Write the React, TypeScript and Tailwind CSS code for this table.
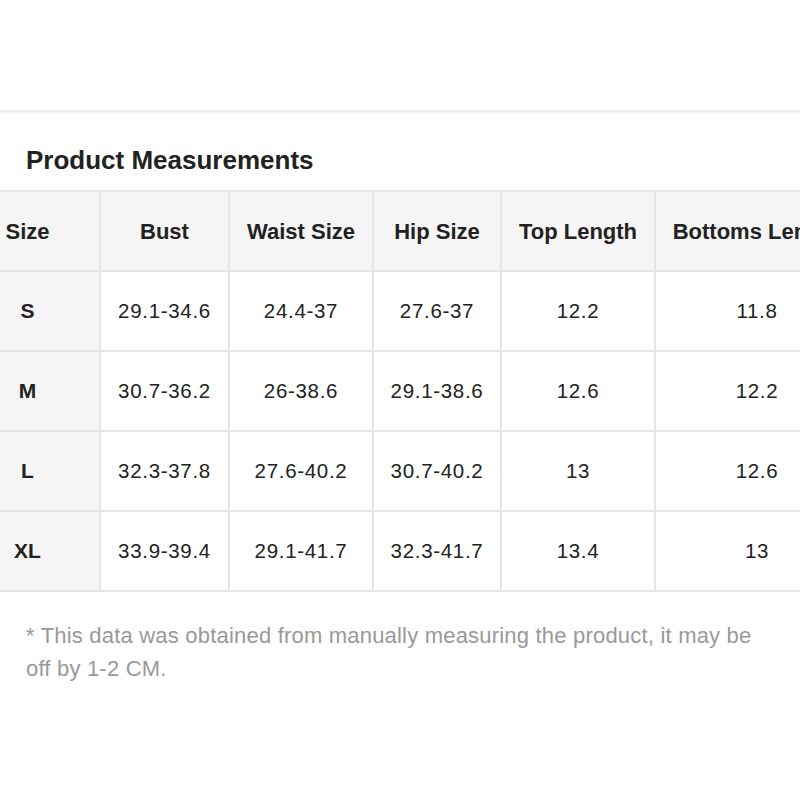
const columns = [
  { label: "Size", width: "w-[145px]" },
  { label: "Bust", width: "w-[129px]" },
  { label: "Waist Size", width: "w-[144px]" },
  { label: "Hip Size", width: "w-[128px]" },
  { label: "Top Length", width: "w-[154px]" },
  { label: "Bottoms Length", width: "w-[204px]" },
];

const rows = [
  ["S", "29.1-34.6", "24.4-37", "27.6-37", "12.2", "11.8"],
  ["M", "30.7-36.2", "26-38.6", "29.1-38.6", "12.6", "12.2"],
  ["L", "32.3-37.8", "27.6-40.2", "30.7-40.2", "13", "12.6"],
  ["XL", "33.9-39.4", "29.1-41.7", "32.3-41.7", "13.4", "13"],
];

export default function App() {
  return (
    <div className="w-[800px] h-[800px] bg-white overflow-hidden font-['Liberation_Sans',Arial,sans-serif] text-[#222]">
      <div className="h-[110px]" />
      <div className="h-[3px] bg-[#f0f0f0]" />

      {/* Title */}
      <h2 className="pl-[26px] pt-[32px] h-[77px] text-[26px] font-bold leading-[30px] text-[#222] whitespace-nowrap">
        Product Measurements
      </h2>

      {/* Table, scrolled a bit to the right */}
      <div className="overflow-hidden">
        <div className="ml-[-44px] w-max border-t-2 border-[#e6e6e6]">
          <div className="flex bg-[#f5f5f5]">
            {columns.map((col) => (
              <div
                key={col.label}
                className={`${col.width} shrink-0 h-[80px] flex items-center justify-center border-r-2 border-b-2 border-[#e6e6e6] text-[22px] font-bold whitespace-nowrap`}
              >
                {col.label}
              </div>
            ))}
          </div>
          {rows.map((row) => (
            <div key={row[0]} className="flex">
              {row.map((cell, i) => (
                <div
                  key={i}
                  className={`${columns[i].width} shrink-0 h-[80px] flex items-center justify-center border-r-2 border-b-2 border-[#e6e6e6] whitespace-nowrap ${
                    i === 0
                      ? "bg-[#f5f5f5] text-[21px] font-bold"
                      : "bg-white text-[20.5px] tracking-[0.7px]"
                  }`}
                >
                  {cell}
                </div>
              ))}
            </div>
          ))}
        </div>
      </div>

      {/* Note */}
      <p className="px-[26px] pt-[27px] text-[22px] tracking-[0.2px] leading-[33px] text-[#999]">
        * This data was obtained from manually measuring the product, it may be
        off by 1-2 CM.
      </p>
    </div>
  );
}
